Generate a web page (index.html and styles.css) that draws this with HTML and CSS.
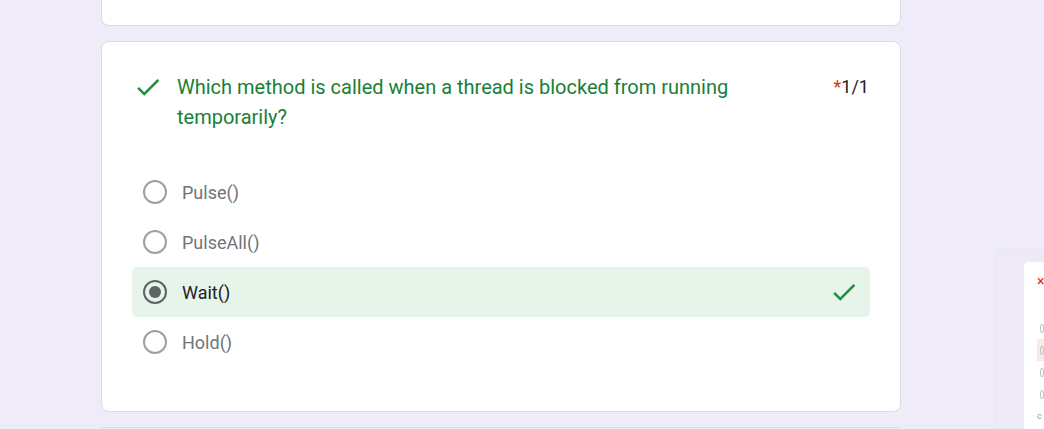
FILE: index.html
```html
<!DOCTYPE html>
<html>
<head>
<meta charset="utf-8">
<link rel="stylesheet" href="styles.css">
</head>
<body>
<div class="page">
  <div class="card card-top"></div>
  <div class="card card-main">
    <div class="q-head">
      <svg class="icon-check" viewBox="0 0 24 24"><path d="M9 16.17L4.83 12l-1.42 1.41L9 19 21 7l-1.41-1.41L9 16.17z"/></svg>
      <div class="q-title">Which method is called when a thread is blocked from running temporarily?</div>
      <div class="q-points"><span class="req">*</span>1/1</div>
    </div>
    <div class="options">
      <div class="opt"><span class="radio"></span><span class="opt-label">Pulse()</span></div>
      <div class="opt"><span class="radio"></span><span class="opt-label">PulseAll()</span></div>
      <div class="opt opt-correct"><span class="radio radio-on"></span><span class="opt-label">Wait()</span>
        <svg class="icon-check opt-check" viewBox="0 0 24 24"><path d="M9 16.17L4.83 12l-1.42 1.41L9 19 21 7l-1.41-1.41L9 16.17z"/></svg>
      </div>
      <div class="opt"><span class="radio"></span><span class="opt-label">Hold()</span></div>
    </div>
  </div>
  <div class="card card-bottom"></div>
</div>
<div class="preview">
  <div class="preview-card">
    <div class="pv-x">×</div>
    <div class="pv-opts">
      <div class="pv-opt"><span class="pv-radio"></span></div>
      <div class="pv-opt pv-wrong"><span class="pv-radio"></span></div>
      <div class="pv-opt"><span class="pv-radio"></span></div>
      <div class="pv-opt"><span class="pv-radio"></span></div>
      <div class="pv-c">c</div>
    </div>
  </div>
</div>
</body>
</html>
```
FILE: styles.css
```css
html, body {
  margin: 0;
  padding: 0;
}
body {
  background: #f0ebf8;
  font-family: Roboto, "Liberation Sans", Arial, sans-serif;
  width: 1044px;
  height: 429px;
  overflow: hidden;
  position: relative;
}
.page {
  width: 800px;
  margin-left: 101px;
  display: flex;
  flex-direction: column;
  gap: 15px;
}
.card {
  background: #fff;
  border: 1px solid #dadce0;
  border-radius: 8px;
  box-sizing: border-box;
}
.card-top {
  height: 26px;
  border-top: none;
  border-radius: 0 0 8px 8px;
}
.card-bottom {
  height: 1px;
  border-bottom: none;
  border-radius: 8px 8px 0 0;
}
.card-main {
  padding: 30px 31px 44px 31px;
}
.q-head {
  display: flex;
  align-items: flex-start;
}
.icon-check {
  width: 30px;
  height: 30px;
  fill: #1e8e3e;
  flex: none;
}
.q-title {
  margin-left: 14px;
  flex: 1;
  color: #188038;
  font-size: 20px;
  line-height: 30px;
  padding-right: 90px;
}
.q-points {
  color: #202124;
  font-size: 18px;
  line-height: 30px;
  flex: none;
}
.req {
  color: #d93025;
}
.options {
  margin: 35px -1px 0 -1px;
  display: flex;
  flex-direction: column;
}
.opt {
  height: 50px;
  display: flex;
  align-items: center;
  padding: 0 11px;
  border-radius: 5px;
}
.opt-correct {
  background: #e6f4ea;
}
.radio {
  width: 24px;
  height: 24px;
  box-sizing: border-box;
  border: 2px solid #9aa0a6;
  border-radius: 50%;
  flex: none;
  display: flex;
  align-items: center;
  justify-content: center;
}
.radio-on {
  border-color: #5f6368;
}
.radio-on::after {
  content: "";
  width: 12px;
  height: 12px;
  border-radius: 50%;
  background: #5f6368;
}
.opt-label {
  margin-left: 15px;
  font-size: 18px;
  color: #70757a;
  flex: 1;
}
.opt-correct .opt-label {
  color: #202124;
}
.opt-check {
  margin-left: auto;
}
.preview {
  position: absolute;
  left: 996px;
  top: 250px;
  width: 48px;
  height: 179px;
  background: #ede9f7;
  border-radius: 10px 0 0 0;
  box-shadow: 0 0 3px rgba(0,0,0,0.06);
  overflow: hidden;
}
.preview-card {
  position: absolute;
  left: 28px;
  top: 12px;
  width: 20px;
  height: 167px;
  background: #fff;
  border-radius: 4px 0 0 0;
  overflow: hidden;
}
.pv-x {
  position: absolute;
  left: 13px;
  top: 10px;
  color: #d93025;
  font-size: 14px;
  line-height: 18px;
}
.pv-opts {
  position: absolute;
  left: 13px;
  top: 55px;
  width: 7px;
}
.pv-opt {
  height: 22px;
  display: flex;
  align-items: center;
  padding-left: 3px;
}
.pv-wrong {
  background: #fce8e6;
}
.pv-radio {
  width: 7px;
  height: 7px;
  border: 1px solid #bdc1c6;
  border-radius: 50%;
}
.pv-c {
  font-size: 9px;
  color: #9aa0a6;
  line-height: 22px;
}
```
